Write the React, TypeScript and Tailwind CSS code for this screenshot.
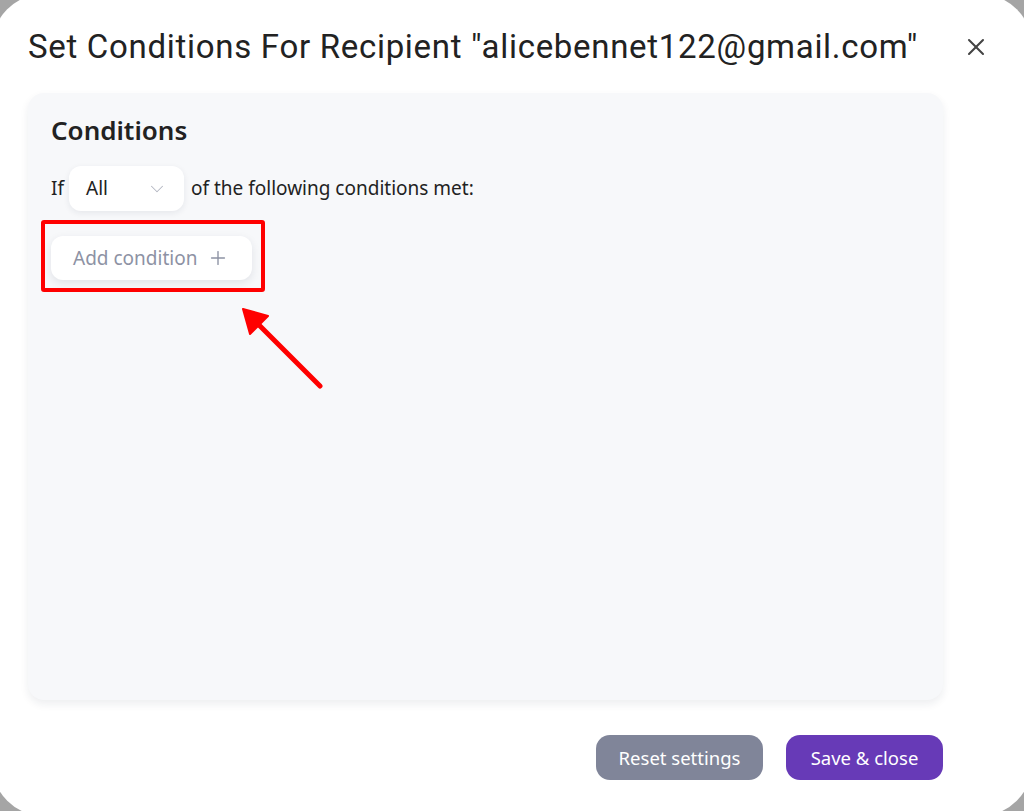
import { X, ChevronDown, Plus } from "lucide-react";

function Select() {
  return (
    <div className="flex h-[45px] w-[115px] items-center justify-between rounded-xl bg-white pl-[17px] pr-[16px] shadow-[0_2px_6px_rgba(30,40,70,0.08)]">
      <span className="text-[19px] text-[#222]">All</span>
      <ChevronDown className="h-[22px] w-[22px] text-[#b3b6c1]" strokeWidth={1.1} />
    </div>
  );
}

function AddCondition() {
  return (
    <div className="relative w-fit">
      <button className="flex h-[44px] w-[201px] items-center gap-[10px] rounded-xl bg-white pl-[22px] text-[19px] text-[#8d92a4] shadow-[0_3px_8px_rgba(30,40,70,0.1)]">
        Add condition
        <Plus className="h-[22px] w-[22px]" strokeWidth={1.5} />
      </button>
      {/* annotation */}
      <div className="pointer-events-none absolute -left-[10px] -top-[16px] h-[72px] w-[224px] rounded-[3px] border-4 border-[#ff0000]" />
      <svg className="pointer-events-none absolute left-[185px] top-[66px]" width="90" height="90" viewBox="0 0 90 90">
        <line x1="84" y1="84" x2="18" y2="18" stroke="#ff0000" strokeWidth="5" strokeLinecap="round" />
        <polygon points="7,7 32,14 14,32" fill="#ff0000" stroke="#ff0000" strokeWidth="2" strokeLinejoin="round" />
      </svg>
    </div>
  );
}

export default function App() {
  return (
    <div className="h-[811px] w-[1024px] overflow-hidden bg-[#a5a5a5]">
      <div
        className="relative -left-[8px] -top-[6px] flex h-[822px] w-[1040px] flex-col rounded-[52px] bg-white pl-[36px] pt-[29px]"
        style={{ fontFamily: '"Noto Sans", "Open Sans", sans-serif' }}
      >
        <div className="flex h-[48px] w-[962px] items-center justify-between">
          <h1
            className="text-[33px] font-normal tracking-[0.7px] text-[#222]"
            style={{ fontFamily: 'Roboto, "Liberation Sans", sans-serif' }}
          >
            Set Conditions For Recipient "alicebennet122@gmail.com"
          </h1>
          <X className="h-[28px] w-[28px] text-[#444]" strokeWidth={1.75} />
        </div>

        <div className="mt-[22px] flex h-[607px] w-[915px] flex-col rounded-2xl bg-[#f7f8fa] px-[23px] pt-[19px] shadow-[0_4px_8px_rgba(30,40,70,0.08)]">
          <h2 className="text-[26px] font-semibold leading-[36px] text-[#222]">Conditions</h2>
          <div className="mt-[18px] flex items-center text-[19px] text-[#222]">
            <span className="mr-[5px]">If</span>
            <Select />
            <span className="ml-[7px]">of the following conditions met:</span>
          </div>
          <div className="mt-[25px]">
            <AddCondition />
          </div>
        </div>

        <div className="mt-[35px] flex w-[915px] justify-end gap-[23px]">
          <button className="h-[45px] w-[167px] rounded-[14px] bg-[#808599] text-[18.5px] text-white">
            Reset settings
          </button>
          <button className="h-[45px] w-[157px] rounded-[14px] bg-[#673ab7] text-[18.5px] text-white">
            Save &amp; close
          </button>
        </div>
      </div>
    </div>
  );
}
